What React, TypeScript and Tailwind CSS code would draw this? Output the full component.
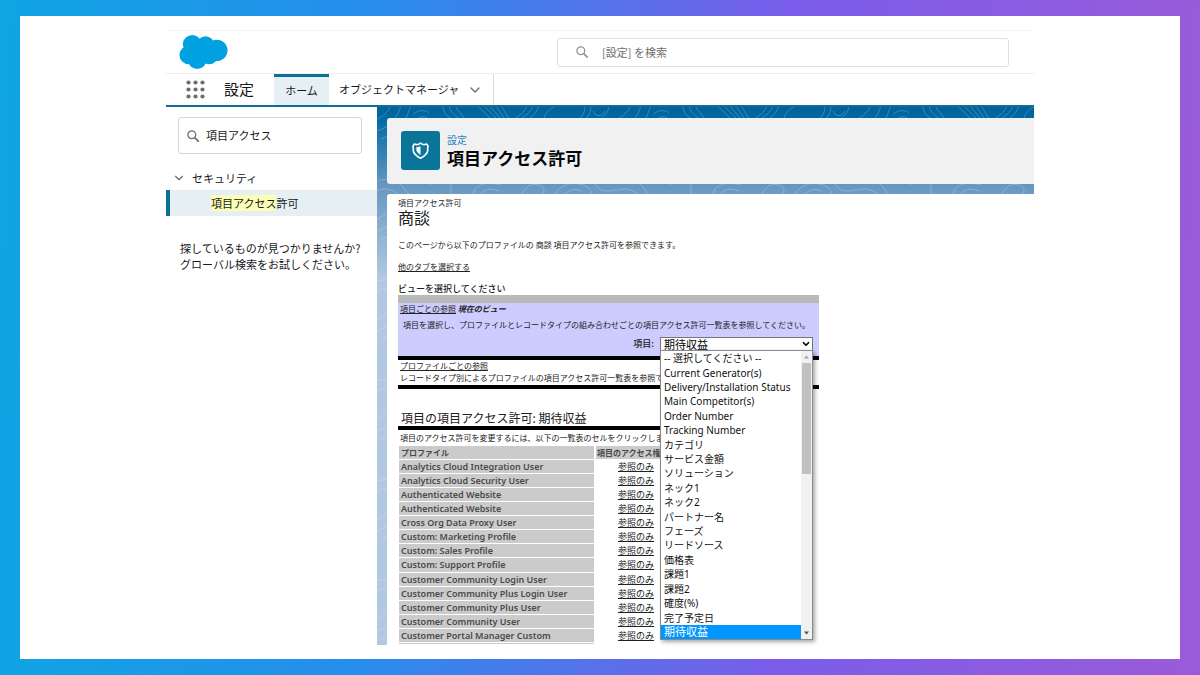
import { ChevronDown } from "lucide-react";

const profiles = [
  "Analytics Cloud Integration User",
  "Analytics Cloud Security User",
  "Authenticated Website",
  "Authenticated Website",
  "Cross Org Data Proxy User",
  "Custom: Marketing Profile",
  "Custom: Sales Profile",
  "Custom: Support Profile",
  "Customer Community Login User",
  "Customer Community Plus Login User",
  "Customer Community Plus User",
  "Customer Community User",
  "Customer Portal Manager Custom",
];

const fields = [
  "-- 選択してください --",
  "Current Generator(s)",
  "Delivery/Installation Status",
  "Main Competitor(s)",
  "Order Number",
  "Tracking Number",
  "カテゴリ",
  "サービス金額",
  "ソリューション",
  "ネック1",
  "ネック2",
  "パートナー名",
  "フェーズ",
  "リードソース",
  "価格表",
  "課題1",
  "課題2",
  "確度(%)",
  "完了予定日",
  "期待収益",
];

const selectedField = "期待収益";

function CloudLogo() {
  return (
    <svg viewBox="0 0 146 102" className="h-[34px] w-[49px]" fill="#00a1e0" aria-hidden="true">
      <circle cx="39" cy="28" r="28" />
      <circle cx="79" cy="30" r="26" />
      <circle cx="113" cy="46" r="32" />
      <circle cx="29" cy="60" r="28" />
      <circle cx="54" cy="74" r="28" />
      <circle cx="90" cy="62" r="26" />
    </svg>
  );
}

function AppLauncherIcon() {
  const steps = [2.5, 9.5, 16.5];

  return (
    <svg viewBox="0 0 19 19" className="h-[19px] w-[19px]" fill="#706e6b" aria-hidden="true">
      {steps.map((y) => steps.map((x) => <circle key={`${x}-${y}`} cx={x} cy={y} r="2.1" />))}
    </svg>
  );
}

function SearchIcon({ className }: { className: string }) {
  return (
    <svg viewBox="0 0 12 12" className={className} fill="none" stroke="currentColor" aria-hidden="true">
      <circle cx="4.800" cy="4.800" r="3.900" strokeWidth="1.3" />
      <path d="M7.700 7.700l3.500 3.500" strokeWidth="1.7" strokeLinecap="round" />
    </svg>
  );
}

function ShieldIcon() {
  return (
    <svg viewBox="0 0 48 48" className="h-[17px] w-[17px]" fill="none" stroke="#fff" strokeWidth="4.5" strokeLinejoin="round">
      <path d="M24 3c-4 5-12 4.500-17 2.500L2.500 12C5 16 3 20 4 26c2 9 11 15 20 20 9-5 18-11 20-20 1-6-1-10 1.500-14L41 5.500C36 7.500 28 8 24 3z" />
      <path d="M24 12c-3 2-7 2.500-11 1.500-1 4-1 9 0 12 2 5 7 9 11 11z" fill="#fff" stroke="none" />
    </svg>
  );
}

function ContourPattern() {
  return (
    <svg className="pointer-events-none absolute inset-0 h-full w-full" aria-hidden="true">
      <defs>
        <pattern id="contours" width="240" height="100" patternUnits="userSpaceOnUse">
          <g fill="none" stroke="#fff" strokeOpacity="0.28" strokeWidth="0.8">
            <path d="M-4 14C6 10 12 4 14-2M0 24C14 20 22 8 24-2M4 32C24 26 30 10 34-2M36 8c4-5 12-6 16-2M40 12c4-3 8-3 12 0" />
            <path d="M66-2c0 8 4 12 10 14M72-2c0 6 6 10 10 14M78-2c2 6 6 8 10 14M100-2l14 14M106-2l14 14M112-2l12 14M118-2l10 14M124-2l8 14" />
            <path d="M150-2c-2 8-8 10-12 14M156-2c-2 8-8 10-12 14M162-2c-2 8-6 10-10 14M184-2c-12 2-16 8-18 16M198 14c8-2 10-10 10-16M204 14c8-2 10-10 10-16M216 4c2 6 10 6 12 0M232-2c0 8-6 12-10 16" />
            <path d="M-4 76c10-6 24-4 30 4s12 16 24 12M0 84c12-6 20 2 26 10M52 78c8-6 24-6 22 4s10 12 18 6M96 92c-2-14 12-18 28-14M102 92c2-10 12-12 20-8" />
            <path d="M140 90c8-2 6-10 14-12s16 2 12 8-18 6-20 2M176 92c4-14 18-18 30-14s10 12 4 16M184 92c4-8 14-12 20-8M218 76c2 8 12 10 24 6M222 90c6-4 14-2 18 2" />
          </g>
        </pattern>
      </defs>
      <rect width="100%" height="100%" fill="url(#contours)" />
    </svg>
  );
}

function GlobalHeader() {
  return (
    <header className="border-t border-[#f3f3f3]">
      <div className="flex h-[43px] items-center border-b border-[#eeeeee]">
        <div className="w-[391px] pl-[13px]">
          <CloudLogo />
        </div>
        <label className="mr-[25px] flex h-[29px] flex-1 items-center gap-[14px] rounded-[3px] border border-[#e0dfde] pl-[18px]">
          <SearchIcon className="h-3 w-3 text-[#969492]" />
          <input
            type="search"
            aria-label="[設定] を検索"
            placeholder="[設定] を検索"
            className="min-w-0 flex-1 text-[11px] outline-none placeholder:text-[#706e6b]"
          />
        </label>
      </div>

      <nav className="flex h-[33px] items-stretch border-b-2 border-[#0b7094] text-[11px] text-[#16181b]">
        <button type="button" aria-label="アプリケーションランチャー" className="flex w-[58px] items-center pl-5">
          <AppLauncherIcon />
        </button>
        <span className="flex w-[50px] items-center text-[15px]">設定</span>
        <a
          href="#home"
          className="flex w-[55px] items-center justify-center border-t-[3px] border-[#0b7094] bg-[#e6eff4] pb-[2px]"
        >
          ホーム
        </a>
        <a href="#objects" className="flex items-center gap-2 border-r border-[#dddbda] px-[10px]">
          オブジェクトマネージャ
          <ChevronDown className="h-4 w-4 text-[#706e6b]" strokeWidth={2} />
        </a>
      </nav>
    </header>
  );
}

function Sidebar() {
  return (
    <aside className="w-[211px] shrink-0 bg-white text-[11px] text-[#16181b]">
      <label className="mt-[10px] mr-[15px] ml-3 flex h-[37px] items-center gap-[7px] rounded-[3px] border border-[#d8d6d5] pl-2">
        <SearchIcon className="h-3 w-3 text-[#706e6b]" />
        <input
          type="text"
          aria-label="クイック検索"
          defaultValue="項目アクセス"
          className="min-w-0 flex-1 outline-none"
        />
      </label>

      <button type="button" className="mt-4 flex h-4 items-center gap-[6px] pl-[6px]">
        <ChevronDown className="h-[14px] w-[14px] text-[#706e6b]" strokeWidth={2} />
        セキュリティ
      </button>

      <a href="#field-access" className="mt-1 flex h-[26px] items-center border-l-4 border-[#0b7094] bg-[#e6eff4] pl-[41px]">
        <mark className="bg-[#fbffb4] leading-4 text-inherit">項目アクセス</mark>許可
      </a>

      <p className="mt-6 pl-[14px] leading-4 whitespace-nowrap">
        探しているものが見つかりませんか?
        <br />
        グローバル検索をお試しください。
      </p>
    </aside>
  );
}

function PageHeader() {
  return (
    <div className="relative flex h-[66px] items-center gap-[7px] rounded-l-[3px] bg-[#f2f1f1] pb-[2px] pl-[14px]">
      <div className="flex h-[39px] w-[39px] items-center justify-center rounded-[3px] bg-[#0b7599]">
        <ShieldIcon />
      </div>
      <div>
        <p className="text-[10px] leading-4 text-[#1f7fc4]">設定</p>
        <h1 className="text-[17px] leading-5 font-bold text-[#080707]">項目アクセス許可</h1>
      </div>
    </div>
  );
}

function FieldPicker() {
  return (
    <div className="flex items-center justify-end gap-[6px] pr-[6px]">
      <label htmlFor="field" className="text-[9px] font-medium">
        項目:
      </label>
      <div className="relative w-[153px]">
        <select
          id="field"
          defaultValue={selectedField}
          className="block h-[14px] w-full appearance-none border border-[#767676] bg-white pl-[3px] text-[11px] leading-3 text-black"
        >
          {fields.map((field) => (
            <option key={field}>{field}</option>
          ))}
        </select>
        <ChevronDown className="pointer-events-none absolute top-[2px] right-[2px] h-[10px] w-[10px] text-black" strokeWidth={4} />

        <div className="absolute top-[13px] left-0 z-10 flex h-[290px] w-full border border-[#8a8a8a] bg-white shadow-[2px_2px_4px_rgba(0,0,0,0.35)]">
          <ul className="flex flex-1 flex-col font-['Noto_Sans','Noto_Sans_CJK_JP',sans-serif] text-[10px] text-[#111]">
            {fields.map((field) => (
              <li
                key={field}
                className={
                  field === selectedField
                    ? "flex flex-1 items-center bg-[#0096ff] pl-[3px] text-[11px] leading-3 text-white"
                    : "flex flex-1 items-center pl-[3px] leading-3 whitespace-nowrap"
                }
              >
                {field}
              </li>
            ))}
          </ul>
          <div className="flex w-[11px] flex-col items-center bg-[#f1f1f1]">
            <svg viewBox="0 0 11 12" className="h-3 w-[11px]" fill="#a3a3a3">
              <path d="M3 7.500l2.500-3 2.500 3z" />
            </svg>
            <div className="h-[111px] w-[9px] bg-[#c1c1c1]" />
            <svg viewBox="0 0 11 12" className="mt-auto h-3 w-[11px]" fill="#505050">
              <path d="M3 4.500l2.500 3 2.500-3z" />
            </svg>
          </div>
        </div>
      </div>
    </div>
  );
}

function ProfileTable() {
  return (
    <table className="mt-px -ml-px h-[200px] border-separate border-spacing-x-[2px] border-spacing-y-[1px] text-left text-[9px] leading-[13px] whitespace-nowrap">
      <thead>
        <tr className="bg-[#cbcbcb] text-[8px] text-[#4a4a4a]">
          <th className="h-[13px] w-[195px] p-0 pl-[2px] font-bold">プロファイル</th>
          <th className="w-[80px] p-0 pl-[1px] font-bold">項目のアクセス権</th>
        </tr>
      </thead>
      <tbody>
        {profiles.map((profile, index) => (
          <tr key={index}>
            <th className="h-[13px] bg-[#cbcbcb] p-0 pl-[2px] font-['Noto_Sans',sans-serif] font-semibold text-[#4a4a4a]">
              {profile}
            </th>
            <td className="p-0 text-center">
              <a href="#access" className="underline">
                参照のみ
              </a>
            </td>
          </tr>
        ))}
        <tr>
          <td className="h-px bg-[#cbcbcb] p-0" />
          <td className="p-0" />
        </tr>
      </tbody>
    </table>
  );
}

function FieldAccess() {
  return (
    <section className="relative rounded-tl-[3px] bg-white pt-[3px] pl-[11px] text-[8px] leading-3 whitespace-nowrap text-[#222]">
      <p>項目アクセス許可</p>
      <h2 className="text-[16px] leading-4">商談</h2>
      <p className="mt-[14px]">このページから以下のプロファイルの 商談 項目アクセス許可を参照できます。</p>
      <a href="#tabs" className="mt-[10px] block underline">
        他のタブを選択する
      </a>
      <h3 className="mt-[10px] text-[9px] font-medium">ビューを選択してください</h3>

      <div className="max-w-[421px]">
        <div className="box-content h-[53px] border-t-8 border-b-4 border-t-[#b9b9b9] border-b-black bg-[#ccccff]">
          <p className="pl-[2px]">
            <a href="#by-field" className="underline">
              項目ごとの参照
            </a>{" "}
            <em className="font-bold">現在のビュー</em>
          </p>
          <p className="mt-1 mb-[6px] pl-[5px]">
            項目を選択し、プロファイルとレコードタイプの組み合わせごとの項目アクセス許可一覧表を参照してください。
          </p>
          <FieldPicker />
        </div>
        <div className="border-b-4 border-black pb-px pl-[2px]">
          <a href="#by-profile" className="block underline">
            プロファイルごとの参照
          </a>
          <p>レコードタイプ別によるプロファイルの項目アクセス許可一覧表を参照でき</p>
        </div>
      </div>

      <h3 className="mt-5 max-w-[400px] border-b-4 border-black pl-[3px] text-[12px] leading-[17px]">
        項目の項目アクセス許可: 期待収益
      </h3>
      <p className="mt-[2px] pl-[2px]">項目のアクセス許可を変更するには、以下の一覧表のセルをクリックしま</p>
      <ProfileTable />
    </section>
  );
}

function App() {
  return (
    <div className="flex min-h-screen flex-col bg-linear-[92deg,#0fa5e3_0%,#268eec_30%,#7a5dea_65%,#9a5bd9_100%] px-5 py-4 font-['Noto_Sans_CJK_JP',sans-serif]">
      <div className="flex-1 bg-white pt-[14px]">
        <div className="mx-auto max-w-[868px]">
          <GlobalHeader />
          <div className="flex">
            <Sidebar />
            <main className="relative flex min-w-0 flex-1 flex-col gap-[10px] bg-linear-[180deg,#00609c_0px,#006aa5_12px,#6898c1_80px,#b0c8e0_170px] pt-[11px] pl-[10px]">
              <ContourPattern />
              <PageHeader />
              <FieldAccess />
            </main>
          </div>
        </div>
      </div>
    </div>
  );
}

export default App;
